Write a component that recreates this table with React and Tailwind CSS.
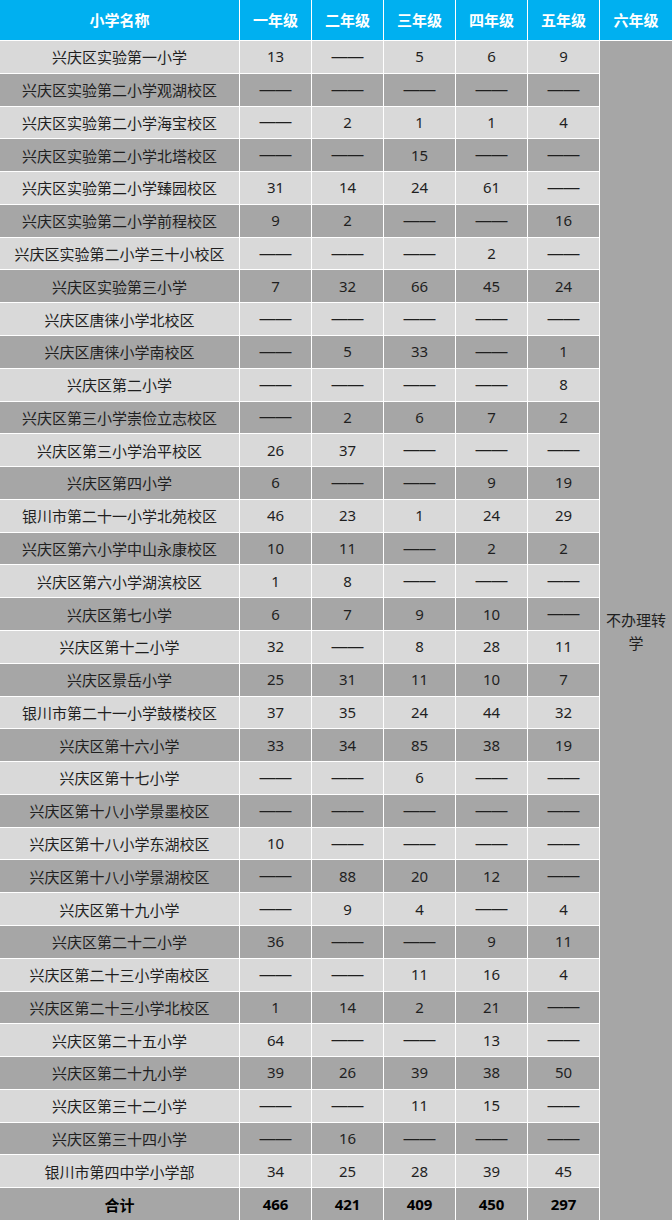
import React from "react";

const D = "——";
const rows = [
  ["兴庆区实验第一小学", "13", D, "5", "6", "9"],
  ["兴庆区实验第二小学观湖校区", D, D, D, D, D],
  ["兴庆区实验第二小学海宝校区", D, "2", "1", "1", "4"],
  ["兴庆区实验第二小学北塔校区", D, D, "15", D, D],
  ["兴庆区实验第二小学臻园校区", "31", "14", "24", "61", D],
  ["兴庆区实验第二小学前程校区", "9", "2", D, D, "16"],
  ["兴庆区实验第二小学三十小校区", D, D, D, "2", D],
  ["兴庆区实验第三小学", "7", "32", "66", "45", "24"],
  ["兴庆区唐徕小学北校区", D, D, D, D, D],
  ["兴庆区唐徕小学南校区", D, "5", "33", D, "1"],
  ["兴庆区第二小学", D, D, D, D, "8"],
  ["兴庆区第三小学崇俭立志校区", D, "2", "6", "7", "2"],
  ["兴庆区第三小学治平校区", "26", "37", D, D, D],
  ["兴庆区第四小学", "6", D, D, "9", "19"],
  ["银川市第二十一小学北苑校区", "46", "23", "1", "24", "29"],
  ["兴庆区第六小学中山永康校区", "10", "11", D, "2", "2"],
  ["兴庆区第六小学湖滨校区", "1", "8", D, D, D],
  ["兴庆区第七小学", "6", "7", "9", "10", D],
  ["兴庆区第十二小学", "32", D, "8", "28", "11"],
  ["兴庆区景岳小学", "25", "31", "11", "10", "7"],
  ["银川市第二十一小学鼓楼校区", "37", "35", "24", "44", "32"],
  ["兴庆区第十六小学", "33", "34", "85", "38", "19"],
  ["兴庆区第十七小学", D, D, "6", D, D],
  ["兴庆区第十八小学景墨校区", D, D, D, D, D],
  ["兴庆区第十八小学东湖校区", "10", D, D, D, D],
  ["兴庆区第十八小学景湖校区", D, "88", "20", "12", D],
  ["兴庆区第十九小学", D, "9", "4", D, "4"],
  ["兴庆区第二十二小学", "36", D, D, "9", "11"],
  ["兴庆区第二十三小学南校区", D, D, "11", "16", "4"],
  ["兴庆区第二十三小学北校区", "1", "14", "2", "21", D],
  ["兴庆区第二十五小学", "64", D, D, "13", D],
  ["兴庆区第二十九小学", "39", "26", "39", "38", "50"],
  ["兴庆区第三十二小学", D, D, "11", "15", D],
  ["兴庆区第三十四小学", D, "16", D, D, D],
  ["银川市第四中学小学部", "34", "25", "28", "39", "45"],
];
const total = ["合计", "466", "421", "409", "450", "297"];
const headers = ["小学名称", "一年级", "二年级", "三年级", "四年级", "五年级", "六年级"];

function fontFor(c, j) {
  if (c === D) return "font-['Liberation_Sans',sans-serif] text-[16px]";
  if (j === 0) return "font-['Noto_Sans_CJK_SC',sans-serif]";
  return "font-['Noto_Sans','Noto_Sans_CJK_SC',sans-serif]";
}

export default function App() {
  return (
    <div className="grid w-[672px] h-[1220px] bg-white gap-px grid-cols-[239px_71px_71px_71px_71px_71px_72px] grid-rows-[40px_repeat(36,1fr)] text-[15px] text-[#1f1f1f] font-['Noto_Sans','Noto_Sans_CJK_SC',sans-serif]">
      <div className="col-start-7 row-start-2 row-span-36 bg-[#a6a6a6] flex items-center justify-center text-center leading-[23px] px-px font-['Noto_Sans_CJK_SC',sans-serif]">
        不办理转学
      </div>
      {headers.map((h) => (
        <div
          key={h}
          className="bg-[#00b0f0] flex items-center justify-center font-bold text-white font-['Noto_Sans_CJK_SC',sans-serif]"
        >
          {h}
        </div>
      ))}
      {rows.map((r, i) =>
        r.map((c, j) => (
          <div
            key={i + "-" + j}
            className={
              "flex items-center justify-center whitespace-nowrap leading-none " +
              fontFor(c, j) +
              " " +
              (i % 2 === 0 ? "bg-[#d9d9d9]" : "bg-[#a6a6a6]")
            }
          >
            {c}
          </div>
        ))
      )}
      {total.map((c, j) => (
        <div
          key={"t" + j}
          className={
            "flex items-center justify-center bg-[#a6a6a6] font-bold text-black leading-none " +
            fontFor(c, j)
          }
        >
          {c}
        </div>
      ))}
    </div>
  );
}
